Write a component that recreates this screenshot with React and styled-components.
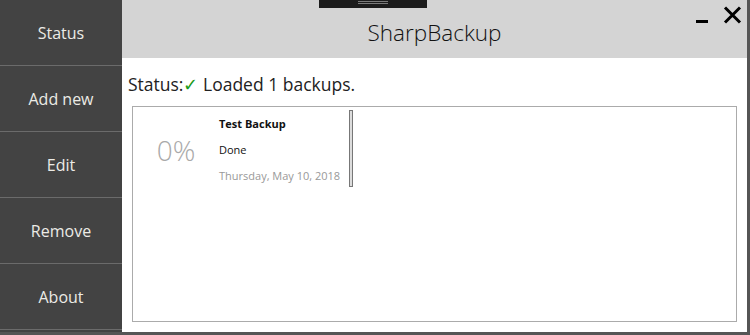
import React from "react";
import styled, { createGlobalStyle } from "styled-components";

const GlobalStyle = createGlobalStyle`
  html, body {
    margin: 0;
    padding: 0;
    background: #555555;
    font-family: "Open Sans", "Noto Sans", sans-serif;
  }
`;

const menu = ["Status", "Add new", "Edit", "Remove", "About"];

function App() {
  return (
    <>
      <GlobalStyle />
      <Window>
        <Grip>
          <GripLine />
          <GripLine />
        </Grip>
        <Sidebar>
          {menu.map((item) => (
            <MenuItem key={item}>{item}</MenuItem>
          ))}
        </Sidebar>
        <Main>
          <Header>
            <span />
            <Title>SharpBackup</Title>
            <Controls>
              <Minimize />
              <svg width="19" height="18" viewBox="0 0 19 18">
                <path d="M2 1.5 L17 16.5 M17 1.5 L2 16.5" stroke="#000" strokeWidth="3" />
              </svg>
            </Controls>
          </Header>
          <StatusLine>
            Status:<Check>✓</Check> Loaded 1 backups.
          </StatusLine>
          <ListBox>
            <Card>
              <Percent>0%</Percent>
              <Info>
                <Name>Test Backup</Name>
                <State>Done</State>
                <DateText>Thursday, May 10, 2018</DateText>
              </Info>
              <Bar />
            </Card>
          </ListBox>
        </Main>
      </Window>
    </>
  );
}

export default App;

const Window = styled.div`
  position: relative;
  width: 747px;
  height: 332px;
  display: flex;
  background: #ffffff;
  overflow: hidden;
`;

const Grip = styled.div`
  position: absolute;
  top: 0;
  left: 319px;
  width: 108px;
  height: 8px;
  background: #1c1c1c;
  display: flex;
  flex-direction: column;
  align-items: center;
  gap: 1px;
  padding-top: 1px;
  box-sizing: border-box;
`;

const GripLine = styled.div`
  width: 30px;
  height: 1px;
  background: #7a7a7a;
`;

const Sidebar = styled.div`
  width: 122px;
  flex-shrink: 0;
  background: #434343;
  display: flex;
  flex-direction: column;
`;

const MenuItem = styled.div`
  height: 65px;
  border-bottom: 1px solid #6b6b6b;
  display: flex;
  align-items: center;
  justify-content: center;
  color: #ecebe6;
  font-size: 16px;
`;

const Main = styled.div`
  flex: 1;
  display: flex;
  flex-direction: column;
  min-width: 0;
`;

const Header = styled.div`
  height: 58px;
  background: #d4d4d4;
  display: grid;
  grid-template-columns: 1fr auto 1fr;
  align-items: center;
`;

const Title = styled.div`
  font-size: 22.5px;
  font-weight: 300;
  color: #111;
  padding-top: 6px;
`;

const Controls = styled.div`
  justify-self: end;
  align-self: start;
  display: flex;
  align-items: flex-end;
  gap: 15px;
  padding: 6px 5px 0 0;
`;

const Minimize = styled.div`
  width: 12px;
  height: 3px;
  background: #000;
  margin-bottom: 1px;
`;

const StatusLine = styled.div`
  font-size: 17.5px;
  color: #222;
  padding: 13px 0 0 6px;
  height: 48px;
  box-sizing: border-box;
  line-height: 26px;
  white-space: nowrap;
`;

const Check = styled.span`
  color: #1a9a1a;
`;

const ListBox = styled.div`
  flex: 1;
  margin: 0 10px 10px 10px;
  border: 1px solid #ababab;
  display: flex;
  align-items: flex-start;
`;

const Card = styled.div`
  display: flex;
  align-items: center;
  height: 85px;
`;

const Percent = styled.div`
  width: 86px;
  text-align: center;
  font-size: 28px;
  font-weight: 300;
  color: #a9a9a9;
`;

const Info = styled.div`
  display: flex;
  flex-direction: column;
  gap: 9px;
  font-size: 11px;
  line-height: 17px;
  width: 130px;
  white-space: nowrap;
`;

const Name = styled.div`
  font-weight: bold;
  color: #111;
`;

const State = styled.div`
  color: #111;
`;

const DateText = styled.div`
  color: #999;
`;

const Bar = styled.div`
  align-self: flex-start;
  margin-top: 3px;
  width: 2px;
  height: 75px;
  border: 1px solid #777;
  background: #dcdcdc;
`;
